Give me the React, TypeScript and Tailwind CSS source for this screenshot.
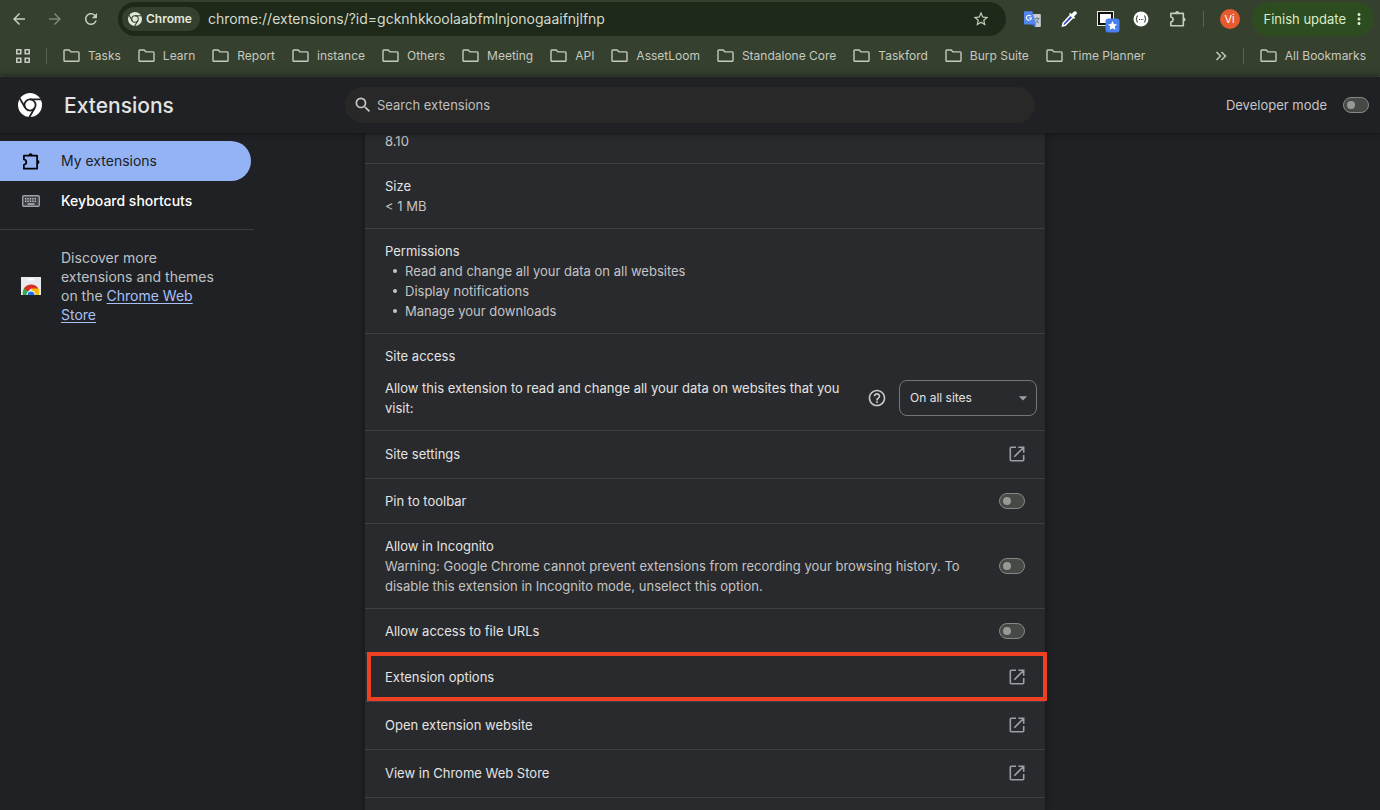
import React, { useState } from 'react';
import {
  MdArrowBack,
  MdArrowForward,
  MdRefresh,
  MdStarBorder,
  MdMoreVert,
  MdSearch,
  MdHelpOutline,
  MdArrowDropDown,
} from 'react-icons/md';

const bookmarks = [
  'Tasks', 'Learn', 'Report', 'instance', 'Others', 'Meeting', 'API',
  'AssetLoom', 'Standalone Core', 'Taskford', 'Burp Suite', 'Time Planner',
];

const permissions = [
  'Read and change all your data on all websites',
  'Display notifications',
  'Manage your downloads',
];

function ChromeLogo({ className, line }: { className: string; line: string }) {
  return (
    <svg viewBox="0 0 24 24" className={className} aria-hidden="true">
      <circle cx="12" cy="12" r="12" fill="currentColor" />
      <g fill="none" stroke={line} strokeWidth="1.8">
        <circle cx="12" cy="12" r="5.6" />
        <path d="M12 6.4H23M7.2 14.8 1.6 5.1M16.8 14.8 11.2 24.5" />
      </g>
    </svg>
  );
}

function PuzzleIcon({ className }: { className: string }) {
  return (
    <svg viewBox="0 0 20 20" className={className} fill="none" stroke="currentColor" strokeWidth="1.8" strokeLinejoin="round" aria-hidden="true">
      <path d="M2 3.8h13.9v13.7H2v-4c3.4-.6 3.4-5.1 0-5.7z" />
      <path d="M6.8 3.4a2.2 2.2 0 0 1 4.4 0zM16.2 8.4a2.2 2.2 0 0 1 0 4.4z" fill="currentColor" stroke="none" />
    </svg>
  );
}

function FolderIcon() {
  return (
    <svg viewBox="0 0 17 14" className="h-[14px] w-[17px] shrink-0" fill="none" stroke="currentColor" strokeWidth="1.4" strokeLinejoin="round" aria-hidden="true">
      <path d="M1 1.8q0-.8.8-.8h4.4l1.8 1.9h7.2q.8 0 .8.8v7.7q0 .8-.8.8H1.8q-.8 0-.8-.8z" />
    </svg>
  );
}

function KeyboardIcon() {
  return (
    <svg viewBox="0 0 18 12" className="h-3 w-[18px]" aria-hidden="true">
      <rect x="0.7" y="0.7" width="16.6" height="10.6" rx="1.2" fill="#3c4043" stroke="#9aa0a6" strokeWidth="1.4" />
      <path d="M3 3.7h12M3 6.2h12" stroke="#bdc1c6" strokeWidth="1.4" strokeDasharray="1.4 1" />
      <path d="M5.5 9h7" stroke="#bdc1c6" strokeWidth="1.4" />
    </svg>
  );
}

function LaunchIcon() {
  return (
    <svg viewBox="0 0 16 16" className="size-4" fill="none" stroke="currentColor" strokeWidth="1.6" aria-hidden="true">
      <path d="M7 1.3H2.3q-1 0-1 1v11.4q0 1 1 1h11.4q1 0 1-1V9M9.3 1.3h5.4v5.4M14.3 1.7 5.3 10.7" />
    </svg>
  );
}

function StoreIcon() {
  return (
    <svg viewBox="0 0 20 18" className="h-[18px] w-5" aria-hidden="true">
      <rect width="20" height="18" fill="#e8eaed" />
      <rect x="7" y="1.5" width="6" height="2" rx="1" fill="#fff" />
      <path d="M2 18a8 8 0 0 1 3-8.6L8 14v4z" fill="#34a853" />
      <path d="M18 18a8 8 0 0 0-.8-7H10l2 7z" fill="#fbbc04" />
      <path d="M3 11.5a8.3 8.3 0 0 1 14.3 0H10l-3 3z" fill="#d93025" />
      <path d="M5.5 18a4.5 4.5 0 0 1 9 0z" fill="#fff" />
      <path d="M6.5 18a3.5 3.5 0 0 1 7 0z" fill="#1a73e8" />
    </svg>
  );
}

function TranslateIcon() {
  return (
    <svg viewBox="0 0 17 17" className="size-[17px]" aria-hidden="true">
      <path d="M6 3h10q.8 0 .8.8v11.4q0 .8-.8.8h-5z" fill="#c9cdd2" />
      <path d="M10.5 7.5h5M13 6.3v1.2M14.7 7.5q-.7 3-3.7 4.7M11.5 8.7q1 2.3 3.5 3.5" fill="none" stroke="#5f7d8c" strokeWidth=".9" />
      <path d="m8 13 3 3.4.8-3.4z" fill="#3367d6" />
      <path d="M.8.3h7.5L12 13.4H.8q-.8 0-.8-.8V1.1Q0 .3.8.3z" fill="#5186ec" />
      <path d="M6.9 5.2A2.5 2.5 0 1 0 7.4 7H5.1" fill="none" stroke="#fff" strokeWidth="1.1" />
    </svg>
  );
}

function PickerIcon() {
  return (
    <svg viewBox="0 0 16 16" className="size-4" aria-hidden="true">
      <path d="m9.5 4 2.5 2.5-7.8 7.8-2.7.6.6-2.7z" fill="#2b45c4" stroke="#fff" strokeWidth="1.5" />
      <path d="m8 3 5 5 1.2-1.2-1.2-1.2 2.3-2.3a1.7 1.7 0 0 0-2.5-2.5l-2.3 2.3L9.2 1.8z" fill="#fff" />
    </svg>
  );
}

function CaptureIcon() {
  return (
    <svg viewBox="0 0 23 22" className="h-[22px] w-[23px] shrink-0" aria-hidden="true">
      <rect x=".5" y=".5" width="16" height="14" fill="#111" stroke="#e8e8e8" />
      <rect x="3" y="3" width="11" height="9" fill="#fff" />
      <rect x="8.5" y="7.5" width="14" height="14" rx="3" fill="#4a80f0" />
      <path d="m15.5 10 1.4 3 3.2.4-2.4 2.2.7 3.2-2.9-1.6-2.9 1.6.7-3.2-2.4-2.2 3.2-.4z" fill="#fff" />
    </svg>
  );
}

function JsonIcon() {
  return (
    <svg viewBox="0 0 16 16" className="size-4" aria-hidden="true">
      <circle cx="8" cy="8" r="7.5" fill="#fff" />
      <path d="M5 4.8q-1.2 0-1.2 1.2v1q0 1-.9 1 .9 0 .9 1v1q0 1.2 1.2 1.2M11 4.8q1.2 0 1.2 1.2v1q0 1 .9 1-.9 0-.9 1v1q0 1.2-1.2 1.2" fill="none" stroke="#333" />
      <path d="M6 8.5h1M7.8 8.5h1M9.5 8.5h.8" stroke="#333" />
    </svg>
  );
}

function Toggle({ label }: { label: string }) {
  const [on, setOn] = useState(false);
  return (
    <label className="relative flex shrink-0 cursor-pointer">
      <input
        type="checkbox"
        aria-label={label}
        checked={on}
        onChange={() => setOn(!on)}
        className="peer sr-only"
      />
      <span className="flex h-4 w-[26px] items-center rounded-full border border-[#868886] bg-[#474947] px-[3px] peer-checked:justify-end peer-checked:bg-[#8ab4f8]">
        <span className="size-2 rounded-full bg-[#979997]" />
      </span>
    </label>
  );
}

function ToggleRow({ title, children }: { title: string; children?: React.ReactNode }) {
  return (
    <section className="flex items-center justify-between gap-7 border-b border-[#3f4043] px-5 py-3">
      <div>
        <h2>{title}</h2>
        {children}
      </div>
      <Toggle label={title} />
    </section>
  );
}

function LinkRow({ title, highlighted }: { title: string; highlighted?: boolean }) {
  return (
    <div className="relative">
      <button className="flex h-12 w-full items-center justify-between border-b border-[#3f4043] px-5 pb-px text-left">
        {title}
        <span className="text-[#9aa0a6]"><LaunchIcon /></span>
      </button>
      {highlighted && (
        <div className="pointer-events-none absolute -top-0.5 -right-0.5 bottom-px left-0.5 border-4 border-[#ee4023]" />
      )}
    </div>
  );
}

function Bookmark({ name }: { name: string }) {
  return (
    <button className="flex shrink-0 items-center gap-2 whitespace-nowrap">
      <FolderIcon />
      {name}
    </button>
  );
}

export default function App() {
  const [query, setQuery] = useState('');

  return (
    <div className="flex h-screen flex-col overflow-hidden bg-[#202124] font-['Inter','Liberation_Sans',sans-serif] text-[13px] leading-5 text-[#e3e3e3]">
      {/* Browser toolbar */}
      <div className="shrink-0 border-b border-[#465040] bg-[#35402f] text-[#c4cfba]">
        <div className="flex h-[38px] items-center pr-1.5 pl-2.5">
          <div className="flex items-center gap-[18px]">
            <button aria-label="Back"><MdArrowBack className="size-[18px]" /></button>
            <button aria-label="Forward" className="text-[#7d8873]"><MdArrowForward className="size-[18px]" /></button>
            <button aria-label="Reload"><MdRefresh className="size-[18px]" /></button>
          </div>
          <div className="ml-[18px] flex h-[34px] flex-1 items-center rounded-full bg-[#1e291a] pr-4 pl-1">
            <span className="flex h-6 items-center gap-1 rounded-full bg-[#35402f] pr-2 pl-1.5 text-xs font-semibold text-[#e1e8da]">
              <ChromeLogo className="size-[14px]" line="#35402f" />
              Chrome
            </span>
            <input
              aria-label="Address"
              defaultValue="chrome://extensions/?id=gcknhkkoolaabfmlnjonogaaifnjlfnp"
              className="ml-2 min-w-0 flex-1 bg-transparent text-sm text-[#d3dacb] outline-none"
            />
            <button aria-label="Bookmark this tab"><MdStarBorder className="size-[18px]" /></button>
          </div>
          <div className="ml-[18px] flex shrink-0 items-center gap-5">
            <button aria-label="Translate"><TranslateIcon /></button>
            <button aria-label="Colour picker"><PickerIcon /></button>
            <button aria-label="Capture" className="flex size-4 items-start"><CaptureIcon /></button>
            <button aria-label="JSON viewer"><JsonIcon /></button>
            <button aria-label="Extensions"><PuzzleIcon className="size-[18px]" /></button>
          </div>
          <span className="mx-4 h-4 w-px bg-[#58644f]" />
          <button className="size-5 rounded-full bg-[#e65a2e] text-[11px] text-white">Vi</button>
          <button className="ml-3 flex h-[34px] items-center rounded-full bg-[#2d4d20] pr-1.5 pl-3 text-[13px] text-[#d9ecca]">
            Finish update
            <MdMoreVert className="ml-1 size-[18px]" />
          </button>
        </div>
        <nav className="flex h-[38px] items-center pr-3.5 pb-0.5 pl-4 text-xs text-[#c5c9bf]">
          <button aria-label="Apps">
            <svg viewBox="0 0 14 14" className="size-[14px]" fill="none" stroke="currentColor" strokeWidth="1.6">
              <path d="M.8.8h4v4h-4zM9.2.8h4v4h-4zM.8 9.2h4v4h-4zM9.2 9.2h4v4h-4z" />
            </svg>
          </button>
          <span className="mx-4 h-4 w-px bg-[#58644f]" />
          <div className="flex min-w-0 flex-1 gap-[17px] overflow-hidden">
            {bookmarks.map((b) => (
              <Bookmark key={b} name={b} />
            ))}
          </div>
          <button aria-label="More bookmarks">
            <svg viewBox="0 0 12 10" className="h-2.5 w-3" fill="none" stroke="currentColor" strokeWidth="1.5">
              <path d="m1.5 1 4 4-4 4M6.5 1l4 4-4 4" />
            </svg>
          </button>
          <span className="mx-4 h-4 w-px bg-[#58644f]" />
          <Bookmark name="All Bookmarks" />
        </nav>
      </div>

      {/* Page header */}
      <header className="z-10 flex h-14 shrink-0 items-center bg-[#202124] px-[11px] shadow-[0_0_6px_#111214]">
        <div className="flex flex-1 items-center gap-[22px]">
          <ChromeLogo className="ml-[7px] size-6 text-white" line="#202124" />
          <h1 className="pt-px text-[21px] leading-7 font-medium">Extensions</h1>
        </div>
        <label className="flex h-9 w-[50vw] items-center gap-1 rounded-full bg-[#282828] px-2 text-[#c7c7c7]">
          <MdSearch className="size-5" />
          <input
            type="search"
            aria-label="Search extensions"
            placeholder="Search extensions"
            value={query}
            onChange={(e) => setQuery(e.target.value)}
            className="min-w-0 flex-1 bg-transparent outline-none placeholder:text-[#bfbfbf]"
          />
        </label>
        <div className="flex flex-1 items-center justify-end gap-4 text-[#c7c7c7]">
          Developer mode
          <Toggle label="Developer mode" />
        </div>
      </header>

      <div className="flex min-h-0 flex-1">
        <aside className="w-[254px] shrink-0 pt-2">
          <nav>
            <a href="#extensions" className="mr-[3px] flex h-10 items-center gap-5 rounded-r-full bg-[#94b3f4] pl-[22px] text-sm text-[#202124]">
              <PuzzleIcon className="size-[19px] text-black" />
              My extensions
            </a>
            <a href="#shortcuts" className="flex h-10 items-center gap-5 pl-[22px] text-sm font-medium text-white">
              <span className="flex w-[19px]"><KeyboardIcon /></span>
              Keyboard shortcuts
            </a>
          </nav>
          <div className="mt-2 flex items-center gap-5 border-t border-[#3a3b3e] py-[18px] pr-10 pl-[21px] text-sm leading-[19px] text-[#bdc1c6]">
            <span className="shrink-0"><StoreIcon /></span>
            <p>
              Discover more extensions and themes on the{' '}
              <a href="#store" className="text-[#a8c0f8] underline underline-offset-2">Chrome Web Store</a>
            </p>
          </div>
        </aside>

        <main className="flex min-w-0 flex-1 justify-center pr-56">
          <div className="h-full w-full max-w-[680px] bg-[#292a2d] shadow-[0_0_5px_#121315]">
            <section className="border-b border-[#3f4043] px-5 pb-3.5 text-[#c4c4c4]">
              <p className="leading-4">8.10</p>
            </section>
            <section className="border-b border-[#3f4043] px-5 py-3">
              <h2>Size</h2>
              <p className="text-[#c4c4c4]">&lt; 1 MB</p>
            </section>
            <section className="border-b border-[#3f4043] px-5 py-3">
              <h2>Permissions</h2>
              <ul className="pl-2 text-[#c4c4c4]">
                {permissions.map((p) => (
                  <li key={p} className="flex items-center gap-2 before:size-1 before:rounded-full before:bg-current">
                    {p}
                  </li>
                ))}
              </ul>
            </section>
            <section className="border-b border-[#3f4043] py-3 pr-2 pl-5">
              <h2>Site access</h2>
              <div className="mt-3 flex items-center">
                <label htmlFor="site-access" className="flex-1 pr-4">
                  Allow this extension to read and change all your data on websites that you visit:
                </label>
                <button aria-label="Help"><MdHelpOutline className="size-5 text-[#c7c7c7]" /></button>
                <div className="relative ml-3">
                  <select
                    id="site-access"
                    className="h-9 w-[138px] appearance-none rounded-lg border border-[#757775] bg-transparent px-2.5 text-xs"
                  >
                    <option>On all sites</option>
                    <option>On click</option>
                    <option>On specific sites</option>
                  </select>
                  <MdArrowDropDown className="pointer-events-none absolute top-2 right-1 size-5 text-[#9aa0a6]" />
                </div>
              </div>
            </section>
            <LinkRow title="Site settings" />
            <ToggleRow title="Pin to toolbar" />
            <ToggleRow title="Allow in Incognito">
              <p className="text-[#c4c4c4]">
                Warning: Google Chrome cannot prevent extensions from recording your browsing history. To disable this extension in Incognito mode, unselect this option.
              </p>
            </ToggleRow>
            <ToggleRow title="Allow access to file URLs" />
            <LinkRow title="Extension options" highlighted />
            <LinkRow title="Open extension website" />
            <LinkRow title="View in Chrome Web Store" />
          </div>
        </main>
      </div>
    </div>
  );
}
